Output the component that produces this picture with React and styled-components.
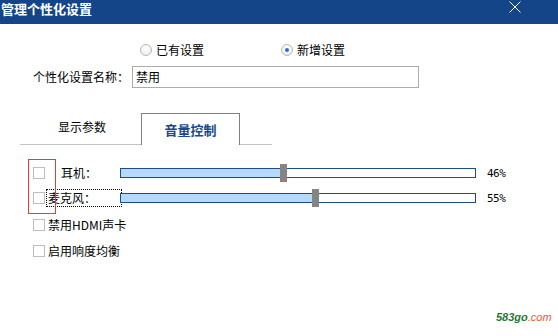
import React from "react";
import styled, { createGlobalStyle } from "styled-components";

const Global = createGlobalStyle`
  html, body { margin: 0; padding: 0; background: #fff; }
  body { font-family: "Noto Sans CJK SC", "Liberation Sans", sans-serif; font-size: 12px; color: #000; }
`;

const Window = styled.div`
  position: relative;
  width: 558px;
  height: 336px;
  background: #fff;
  overflow: hidden;
`;

const TitleBar = styled.div`
  height: 24px;
  background: #134588;
  display: flex;
  align-items: flex-start;
  justify-content: space-between;
  padding-right: 36px;
`;

const Title = styled.div`
  color: #fff;
  font-weight: bold;
  font-size: 13px;
  line-height: 16px;
  padding-left: 1px;
  padding-top: 1px;
`;

const Close = styled.svg`
  width: 14px;
  height: 14px;
`;

const RadioRow = styled.div`
  display: flex;
  align-items: center;
  gap: 77px;
  padding-left: 140px;
  margin-top: 19px;
  height: 14px;
`;

const RadioItem = styled.label`
  display: flex;
  align-items: center;
  gap: 4px;
  line-height: 14px;
`;

const RadioCircle = styled.span`
  width: 10px;
  height: 10px;
  border-radius: 50%;
  border: 1px solid #b8b8b8;
  background: radial-gradient(circle at 50% 35%, #fff 0%, #f0f0f0 70%, #e2e2e2 100%);
  display: flex;
  align-items: center;
  justify-content: center;
  &::after {
    content: "";
    width: 4px;
    height: 4px;
    border-radius: 50%;
    background: ${(p) => (p.$checked ? "#2f6fd6" : "transparent")};
  }
`;

const NameRow = styled.div`
  display: flex;
  align-items: center;
  padding-left: 33px;
  margin-top: 9px;
  height: 22px;
`;

const NameLabel = styled.span`
  width: 99px;
  line-height: 14px;
`;

const NameInput = styled.div`
  box-sizing: border-box;
  width: 287px;
  height: 22px;
  border: 1px solid #acacac;
  padding-left: 3px;
  line-height: 20px;
`;

const TabStrip = styled.div`
  display: flex;
  align-items: flex-end;
  margin-top: 25px;
  margin-left: 20px;
  width: 252px;
  height: 31px;
  border-bottom: 1px solid #c4c4c4;
`;

const Tab = styled.div`
  box-sizing: border-box;
  width: ${(p) => (p.$active ? 99 : 100)}px;
  margin-left: ${(p) => p.$ml}px;
  height: ${(p) => (p.$active ? 32 : 31)}px;
  margin-bottom: ${(p) => (p.$active ? -1 : 0)}px;
  align-self: ${(p) => (p.$active ? "flex-end" : "flex-start")};
  border: ${(p) => (p.$active ? "1px solid #808080" : "none")};
  border-bottom: none;
  background: #fff;
  text-align: center;
  font-size: ${(p) => (p.$active ? 13 : 12)}px;
  font-weight: ${(p) => (p.$active ? "bold" : "normal")};
  color: ${(p) => (p.$active ? "#1a4a8c" : "#000")};
  padding-top: ${(p) => (p.$active ? 9 : 7)}px;
  line-height: 14px;
`;

const Rows = styled.div`
  display: flex;
  flex-direction: column;
  padding-left: 33px;
  margin-top: 22px;
`;

const Row = styled.div`
  display: flex;
  align-items: center;
  height: 12px;
  margin-top: ${(p) => p.$mt || 0}px;
`;

const Check = styled.span`
  box-sizing: border-box;
  flex: none;
  width: 12px;
  height: 12px;
  border: 1px solid #bdbdbd;
  background: #fff;
`;

const RowLabel = styled.span`
  line-height: 14px;
  margin-left: ${(p) => p.$ml}px;
  width: ${(p) => (p.$w ? p.$w + "px" : "auto")};
  flex: none;
  outline: ${(p) => (p.$focus ? "1px dotted #000" : "none")};
  outline-offset: 1px;
`;

const Track = styled.div`
  box-sizing: border-box;
  position: relative;
  width: 356px;
  height: 10px;
  border: 1px solid #1b4d8e;
  background: #fff;
`;

const Fill = styled.div`
  height: 100%;
  background: #b5d9fc;
`;

const Thumb = styled.div`
  position: absolute;
  top: -5px;
  width: 7px;
  height: 18px;
  background: #858585;
`;

const Pct = styled.span`
  margin-left: 11px;
  font-family: "DejaVu Sans Mono", "Liberation Mono", monospace;
  font-size: 11px;
  letter-spacing: -0.5px;
`;

const Marker = styled.div`
  position: absolute;
  left: 28px;
  top: 159px;
  width: 26px;
  height: 53px;
  border: 1px solid #ec3b2c;
`;

const Watermark = styled.div`
  position: absolute;
  left: 496px;
  top: 310px;
  font-family: "Liberation Sans", sans-serif;
  font-style: italic;
  font-weight: bold;
  font-size: 11px;
  line-height: 14px;
  color: #1f7a34;
  span { color: #ec5a2c; font-weight: normal; }
`;

function Slider({ pct }) {
  const w = 354;
  const c = (pct / 100) * 356;
  return (
    <Track>
      <Fill style={{ width: Math.min(w, c) }} />
      <Thumb style={{ left: c - 4.5 }} />
    </Track>
  );
}

export default function App() {
  return (
    <Window>
      <Global />
      <TitleBar>
        <Title>管理个性化设置</Title>
        <Close viewBox="0 0 14 14">
          <path d="M1.5 1.5 L12.5 12.5 M12.5 1.5 L1.5 12.5" stroke="#fff" strokeWidth="1" fill="none" />
        </Close>
      </TitleBar>
      <RadioRow>
        <RadioItem>
          <RadioCircle />
          已有设置
        </RadioItem>
        <RadioItem>
          <RadioCircle $checked />
          新增设置
        </RadioItem>
      </RadioRow>
      <NameRow>
        <NameLabel>个性化设置名称：</NameLabel>
        <NameInput>禁用</NameInput>
      </NameRow>
      <TabStrip>
        <Tab $ml={12}>显示参数</Tab>
        <Tab $ml={9} $active>音量控制</Tab>
      </TabStrip>
      <Rows>
        <Row>
          <Check />
          <RowLabel $ml={16} $w={59}>耳机：</RowLabel>
          <Slider pct={46} />
          <Pct>46%</Pct>
        </Row>
        <Row $mt={13}>
          <Check />
          <RowLabel $ml={3} $w={72} $focus>麦克风：</RowLabel>
          <Slider pct={55} />
          <Pct>55%</Pct>
        </Row>
        <Row $mt={15}>
          <Check />
          <RowLabel $ml={3}>禁用HDMI声卡</RowLabel>
        </Row>
        <Row $mt={14}>
          <Check />
          <RowLabel $ml={3}>启用响度均衡</RowLabel>
        </Row>
      </Rows>
      <Marker />
      <Watermark>
        583go<span>.com</span>
      </Watermark>
    </Window>
  );
}
